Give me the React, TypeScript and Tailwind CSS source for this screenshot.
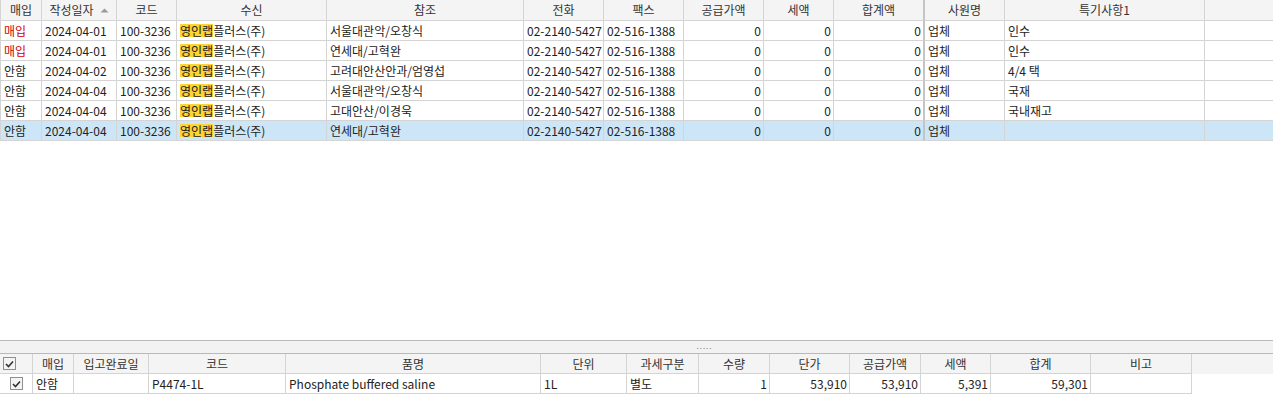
import React from 'react';

type Col = { label: string; w: string; align?: 'left' | 'right' | 'center'; thick?: boolean };

const topCols: Col[] = [
  { label: '매입', w: 'w-[41px]' },
  { label: '작성일자', w: 'w-[75px]' },
  { label: '코드', w: 'w-[60px]' },
  { label: '수신', w: 'w-[150px]' },
  { label: '참조', w: 'w-[197px]' },
  { label: '전화', w: 'w-[80px]' },
  { label: '팩스', w: 'w-[80px]' },
  { label: '공급가액', w: 'w-[80px]', align: 'right' },
  { label: '세액', w: 'w-[70px]', align: 'right' },
  { label: '합계액', w: 'w-[91px]', align: 'right', thick: true },
  { label: '사원명', w: 'w-[80px]' },
  { label: '특기사항1', w: 'w-[200px]' },
];

const rows = [
  { kind: '매입', date: '2024-04-01', ref: '서울대관악/오창식', note: '인수' },
  { kind: '매입', date: '2024-04-01', ref: '연세대/고혁완', note: '인수' },
  { kind: '안함', date: '2024-04-02', ref: '고려대안산안과/엄영섭', note: '4/4 택' },
  { kind: '안함', date: '2024-04-04', ref: '서울대관악/오창식', note: '국재' },
  { kind: '안함', date: '2024-04-04', ref: '고대안산/이경욱', note: '국내재고' },
  { kind: '안함', date: '2024-04-04', ref: '연세대/고혁완', note: '', selected: true },
];

const bottomCols: Col[] = [
  { label: '', w: 'w-[33px]' },
  { label: '매입', w: 'w-[41px]' },
  { label: '입고완료일', w: 'w-[75px]' },
  { label: '코드', w: 'w-[137px]' },
  { label: '품명', w: 'w-[255px]' },
  { label: '단위', w: 'w-[86px]' },
  { label: '과세구분', w: 'w-[72px]' },
  { label: '수량', w: 'w-[71px]', align: 'right' },
  { label: '단가', w: 'w-[80px]', align: 'right' },
  { label: '공급가액', w: 'w-[71px]', align: 'right' },
  { label: '세액', w: 'w-[70px]', align: 'right' },
  { label: '합계', w: 'w-[100px]', align: 'right' },
  { label: '비고', w: 'w-[101px]' },
];

function CheckBox() {
  return (
    <span className="inline-flex items-center justify-center w-[13px] h-[13px] border border-[#8f8f8f] bg-[#f4f4f4]">
      <svg width="9" height="8" viewBox="0 0 9 8">
        <path d="M1 4 L3.5 6.5 L8 1.5" fill="none" stroke="#333" strokeWidth="1.6" />
      </svg>
    </span>
  );
}

function Cell({ col, children, className = '' }: { col: Col; children?: React.ReactNode; className?: string }) {
  const align =
    col.align === 'right' ? 'justify-end pr-[2px]' : col.align === 'center' ? 'justify-center' : 'justify-start pl-[3px]';
  return (
    <div
      className={`${col.w} shrink-0 h-full flex items-center whitespace-nowrap overflow-hidden border-b border-[#d4d4d4] ${
        col.thick ? 'border-r-2 border-r-[#c4c4c4]' : 'border-r border-r-[#d4d4d4]'
      } ${align} ${className}`}
    >
      {children}
    </div>
  );
}

export default function App() {
  return (
    <div
      className="h-[417px] w-[1273px] flex flex-col bg-white text-[12px] text-[#222] overflow-hidden"
      style={{ fontFamily: '"Noto Sans CJK KR", "Liberation Sans", sans-serif' }}
    >
      {/* master grid */}
      <div className="h-[340px] flex flex-col">
        <div className="h-[21px] flex bg-[#f4f4f4] text-[#333] border-l border-[#d4d4d4]">
          {topCols.map((c, i) => (
            <Cell key={i} col={{ ...c, align: 'center' }}>
              {c.label}
              {i === 1 && (
                <svg width="9" height="5" viewBox="0 0 9 5" className="ml-[6px]">
                  <path d="M0.5 4.5 L4.5 0.5 L8.5 4.5 Z" fill="#9a9a9a" />
                </svg>
              )}
            </Cell>
          ))}
          <div className="flex-1 h-full border-b border-[#d4d4d4]" />
        </div>
        {rows.map((r, i) => (
          <div key={i} className={`h-[20px] flex border-l border-[#d4d4d4] ${r.selected ? 'bg-[#cde6f7]' : ''}`}>
            <Cell col={topCols[0]} className={r.kind === '매입' ? 'text-[#d00000]' : ''}>
              {r.kind}
            </Cell>
            <Cell col={topCols[1]}>{r.date}</Cell>
            <Cell col={topCols[2]}>100-3236</Cell>
            <Cell col={topCols[3]}>
              <span className="bg-[#fcd535] leading-[13px]">영인랩</span>플러스(주)
            </Cell>
            <Cell col={topCols[4]}>{r.ref}</Cell>
            <Cell col={topCols[5]}>02-2140-5427</Cell>
            <Cell col={topCols[6]}>02-516-1388</Cell>
            <Cell col={topCols[7]}>0</Cell>
            <Cell col={topCols[8]}>0</Cell>
            <Cell col={topCols[9]}>0</Cell>
            <Cell col={topCols[10]}>업체</Cell>
            <Cell col={topCols[11]}>{r.note}</Cell>
            <div className="flex-1 h-full border-b border-[#d4d4d4]" />
          </div>
        ))}
      </div>

      {/* splitter */}
      <div className="h-[14px] flex items-start justify-center bg-[#f2f2f2] border-y border-[#b9b9b9]">
        <span className="ml-[136px] mt-[1px] text-[8px] leading-[8px] tracking-[1px] text-[#777]">.....</span>
      </div>

      {/* detail grid */}
      <div className="flex flex-col">
        <div className="h-[20px] flex bg-[#f4f4f4] text-[#333]">
          {bottomCols.map((c, i) => (
            <Cell key={i} col={{ ...c, align: i === 0 ? 'left' : 'center' }}>
              {i === 0 ? <CheckBox /> : c.label}
            </Cell>
          ))}
        </div>
        <div className="h-[20px] flex">
          <Cell col={{ ...bottomCols[0], align: 'center' }}>
            <CheckBox />
          </Cell>
          <Cell col={bottomCols[1]}>안함</Cell>
          <Cell col={bottomCols[2]} />
          <Cell col={bottomCols[3]}>P4474-1L</Cell>
          <Cell col={bottomCols[4]}>Phosphate buffered saline</Cell>
          <Cell col={bottomCols[5]}>1L</Cell>
          <Cell col={bottomCols[6]}>별도</Cell>
          <Cell col={bottomCols[7]}>1</Cell>
          <Cell col={bottomCols[8]}>53,910</Cell>
          <Cell col={bottomCols[9]}>53,910</Cell>
          <Cell col={bottomCols[10]}>5,391</Cell>
          <Cell col={bottomCols[11]}>59,301</Cell>
          <Cell col={bottomCols[12]} />
        </div>
      </div>
    </div>
  );
}
